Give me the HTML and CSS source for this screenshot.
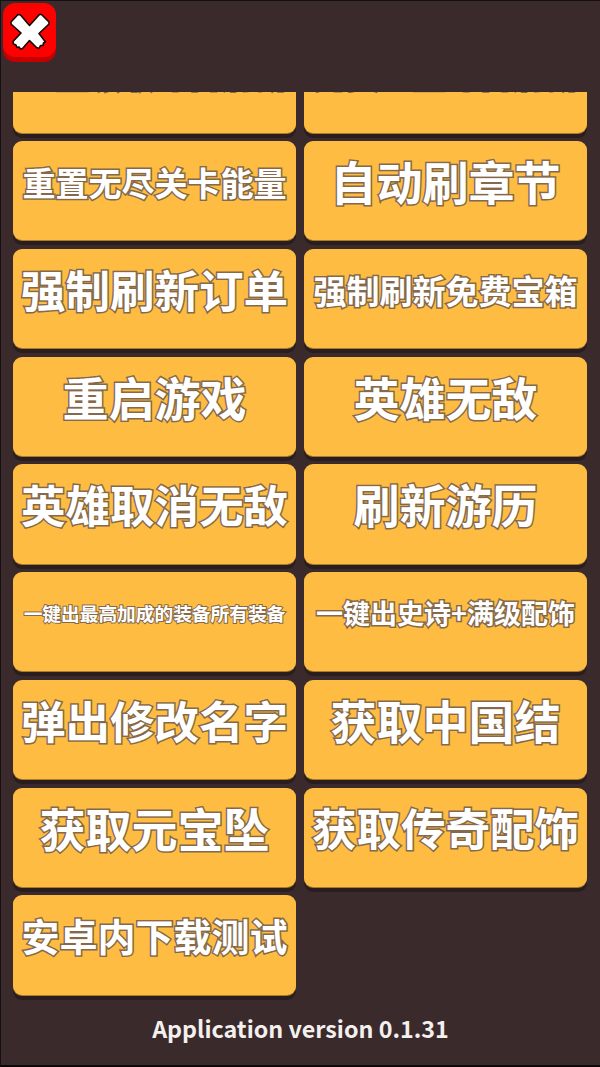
FILE: index.html
```html
<!DOCTYPE html>
<html lang="zh-CN">
<head>
    <meta charset="utf-8"/>
    <meta name="viewport" content="width=device-width, initial-scale=1"/>
    <title>Debug Menu</title>
    <link rel="stylesheet" href="styles.css">
</head>
<body>
    <div class="screen">
        <div class="topbar">
            <button class="close-btn">
                <svg width="40" height="40" viewBox="9.5 10 40 40">
                    <path class="close-x" d="M10.5 22 L17.5 14.5 L20 15 L29 25.5 L39 14.5 L41 14.5 L48.5 22 L48.5 24 L38.5 33.5 L45 42 L43 43 L42.5 45.5 L40 45.5 L38.5 48.5 L36 47.5 L29 40.5 L22 48.5 L20 49 L18.5 47 L16.5 47.5 L15.5 45 L13 44 L12.5 41.5 L20.5 33 L10.5 24 Z"/>
                </svg>
            </button>
        </div>
        <div class="scroller">
            <div class="btn-grid">
                <!-- clipped row, only the bottom of the text shows -->
                <button class="menu-btn size-s">重置领取每日刷新</button>
                <button class="menu-btn size-s">免费重置每日刷新</button>

                <button class="menu-btn size-s">重置无尽关卡能量</button>
                <button class="menu-btn size-xl">自动刷章节</button>

                <button class="menu-btn size-l">强制刷新订单</button>
                <button class="menu-btn size-s">强制刷新免费宝箱</button>

                <button class="menu-btn size-xl">重启游戏</button>
                <button class="menu-btn size-xl">英雄无敌</button>

                <button class="menu-btn size-l">英雄取消无敌</button>
                <button class="menu-btn size-xl">刷新游历</button>

                <button class="menu-btn size-xxs">一键出最高加成的装备所有装备</button>
                <button class="menu-btn size-xs">一键出史诗+满级配饰</button>

                <button class="menu-btn size-l">弹出修改名字</button>
                <button class="menu-btn size-xl">获取中国结</button>

                <button class="menu-btn size-xl">获取元宝坠</button>
                <button class="menu-btn size-l">获取传奇配饰</button>

                <button class="menu-btn size-m">安卓内下载测试</button>
            </div>
        </div>
        <div class="version">Application version 0.1.31</div>
    </div>
</body>
</html>
```

FILE: styles.css
```css
html, body {
    height: 100%;
    margin: 0;
    padding: 0;
}
body {
    background: #3a2a2c;
    font-family: "Noto Sans CJK SC", "Noto Sans", sans-serif;
}
.screen {
    box-sizing: border-box;
    height: 1067px;
    display: flex;
    flex-direction: column;
    border-top: 1px solid #161012;
    border-left: 1px solid #161012;
    border-bottom: 2px solid #0c0808;
}
.topbar {
    height: 91px;
    flex: none;
    padding: 2px 0 0 2px;
    box-sizing: border-box;
}
.close-btn {
    width: 53px;
    height: 54px;
    padding: 0;
    border: 0;
    border-radius: 12px;
    background: #fe0000;
    box-shadow: 0 5px 0 #c40000;
    display: flex;
    align-items: center;
    justify-content: center;
}
.close-x {
    fill: #fff;
    stroke: #120808;
    stroke-width: 1.6;
    stroke-linejoin: round;
}
.scroller {
    flex: 1;
    overflow: hidden;
}
.btn-grid {
    display: grid;
    grid-template-columns: 283px 283px;
    grid-auto-rows: 99.25px;
    gap: 8.5px 8px;
    margin: -58.75px 0 0 12px;
}
.menu-btn {
    padding: 0 0 16px;
    border: 0;
    border-radius: 9px;
    background: #febc42;
    box-shadow: 0 1px 0 #a97c2c, 0 5px 0 #2a1d1e;
    color: #fff;
    font-family: inherit;
    font-weight: 700;
    line-height: 1.2;
    white-space: nowrap;
    -webkit-text-stroke: 3px #85694a;
    paint-order: stroke fill;
}
.size-xl { font-size: 46px; padding-bottom: 20px; }
.size-l { font-size: 44.5px; padding-bottom: 20px; }
.size-m { font-size: 38px; padding-bottom: 20px; }
.size-s { font-size: 33px; }
.size-xs { font-size: 27px; }
.size-xxs { font-size: 18.7px; -webkit-text-stroke-width: 2px; }
.version {
    height: 65px;
    flex: none;
    color: #f4f0ee;
    font-size: 23.3px;
    font-weight: 700;
    line-height: 56px;
    text-align: center;
}
```
